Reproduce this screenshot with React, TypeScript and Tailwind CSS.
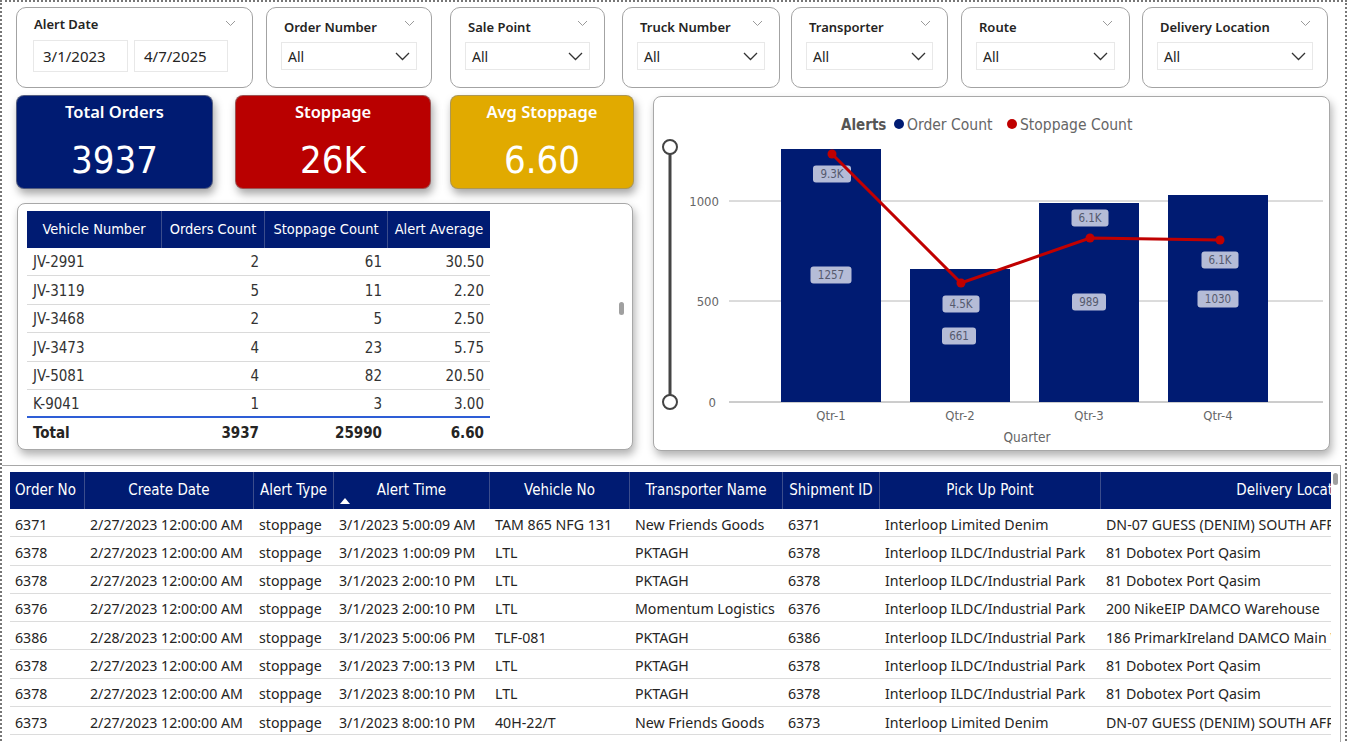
import React from 'react';

const din = "font-['DejaVu_Sans_Condensed','DejaVu_Sans',sans-serif] font-stretch-condensed";

type Filter = { label: string; box: string };

const filters: Filter[] = [
  { label: 'Order Number', box: 'ml-[13px] w-[166px]' },
  { label: 'Sale Point', box: 'ml-[18px] w-[155px]' },
  { label: 'Truck Number', box: 'ml-[17px] w-[158px]' },
  { label: 'Transporter', box: 'ml-[11px] w-[157px]' },
  { label: 'Route', box: 'ml-[13px] w-[169px]' },
  { label: 'Delivery Location', box: 'ml-[12px] w-[186px]' },
];

const vehicles = [
  ['JV-2991', '2', '61', '30.50'],
  ['JV-3119', '5', '11', '2.20'],
  ['JV-3468', '2', '5', '2.50'],
  ['JV-3473', '4', '23', '5.75'],
  ['JV-5081', '4', '82', '20.50'],
  ['K-9041', '1', '3', '3.00'],
];

const cols = [
  { name: 'Order No', w: 'w-[75px]', head: 'justify-start pl-[5px]' },
  { name: 'Create Date', w: 'w-[169px]', head: 'justify-center' },
  { name: 'Alert Type', w: 'w-[80px]', head: 'justify-center' },
  { name: 'Alert Time', w: 'w-[156px]', head: 'justify-center' },
  { name: 'Vehicle No', w: 'w-[140px]', head: 'justify-center' },
  { name: 'Transporter Name', w: 'w-[153px]', head: 'justify-center' },
  { name: 'Shipment ID', w: 'w-[97px]', head: 'justify-center' },
  { name: 'Pick Up Point', w: 'w-[221px]', head: 'justify-center' },
  { name: 'Delivery Location', w: 'w-[388px]', head: 'justify-center' },
];

const ilp = 'Interloop ILDC/Industrial Park';
const d27 = '2/27/2023 12:00:00 AM';

const alerts = [
  ['6371', d27, 'stoppage', '3/1/2023 5:00:09 AM', 'TAM 865 NFG 131', 'New Friends Goods', '6371', 'Interloop Limited Denim', 'DN-07 GUESS (DENIM) SOUTH AFRICA'],
  ['6378', d27, 'stoppage', '3/1/2023 1:00:09 PM', 'LTL', 'PKTAGH', '6378', ilp, '81 Dobotex Port Qasim'],
  ['6378', d27, 'stoppage', '3/1/2023 2:00:10 PM', 'LTL', 'PKTAGH', '6378', ilp, '81 Dobotex Port Qasim'],
  ['6376', d27, 'stoppage', '3/1/2023 2:00:10 PM', 'LTL', 'Momentum Logistics', '6376', ilp, '200 NikeEIP DAMCO Warehouse'],
  ['6386', '2/28/2023 12:00:00 AM', 'stoppage', '3/1/2023 5:00:06 PM', 'TLF-081', 'PKTAGH', '6386', ilp, '186 PrimarkIreland DAMCO Main Warehouse'],
  ['6378', d27, 'stoppage', '3/1/2023 7:00:13 PM', 'LTL', 'PKTAGH', '6378', ilp, '81 Dobotex Port Qasim'],
  ['6378', d27, 'stoppage', '3/1/2023 8:00:10 PM', 'LTL', 'PKTAGH', '6378', ilp, '81 Dobotex Port Qasim'],
  ['6373', d27, 'stoppage', '3/1/2023 8:00:10 PM', '40H-22/T', 'New Friends Goods', '6373', 'Interloop Limited Denim', 'DN-07 GUESS (DENIM) SOUTH AFRICA'],
];

function SmallChevron() {
  return (
    <svg width="11" height="7" viewBox="0 0 11 7" className="absolute right-[16px] top-[12px]">
      <path d="M1 1 L5.5 5.5 L10 1" fill="none" stroke="#9a9a9a" strokeWidth="1" />
    </svg>
  );
}

function Dropdown() {
  return (
    <div className="mx-[14px] mt-[5px] h-[28px] border border-[#e8e8e8] flex items-center justify-between px-[6px]">
      <span className="text-[14px] text-[#252423]">All</span>
      <svg width="15" height="9" viewBox="0 0 15 9">
        <path d="M1 1 L7.5 7.5 L14 1" fill="none" stroke="#333" strokeWidth="1.3" />
      </svg>
    </div>
  );
}

function Kpi({ title, value, bg, box }: { title: string; value: string; bg: string; box: string }) {
  return (
    <div className={`${bg} ${box} h-[94px] rounded-[8px] border border-[#8a8a8a]/60 shadow-[2px_5px_8px_rgba(0,0,0,0.35)] flex flex-col items-center text-white`}>
      <div className="mt-[4px] text-[16.5px] font-semibold">{title}</div>
      <div className={`${din} mt-[16px] text-[38px] leading-none`}>{value}</div>
    </div>
  );
}

function Chart() {
  const bars = [
    { q: 'Qtr-1', x: 127, top: 52 },
    { q: 'Qtr-2', x: 256, top: 172 },
    { q: 'Qtr-3', x: 385, top: 106 },
    { q: 'Qtr-4', x: 514, top: 98 },
  ];
  const labels = [
    { t: '9.3K', x: 178, y: 77, w: 38 },
    { t: '1257', x: 177, y: 178, w: 41 },
    { t: '4.5K', x: 307, y: 207, w: 37 },
    { t: '661', x: 305, y: 239, w: 34 },
    { t: '6.1K', x: 436, y: 121, w: 37 },
    { t: '989', x: 435, y: 205, w: 34 },
    { t: '6.1K', x: 566, y: 163, w: 37 },
    { t: '1030', x: 564, y: 202, w: 41 },
  ];
  const axis = "DejaVu Sans Condensed, DejaVu Sans, sans-serif";
  return (
    <svg width="677" height="355" viewBox="0 0 677 355" className="block">
      <g fontFamily={axis} fontSize="14">
        <text x="187" y="33" fill="#555" fontWeight="bold" fontSize="15">Alerts</text>
        <circle cx="245" cy="27" r="5" fill="#001b72" />
        <text x="253" y="33" fill="#666" fontSize="15.5">Order Count</text>
        <circle cx="358" cy="27" r="5" fill="#c00000" />
        <text x="366" y="33" fill="#666" fontSize="15.5">Stoppage Count</text>
      </g>
      <line x1="75" y1="104" x2="669" y2="104" stroke="#b8b8b8" />
      <line x1="75" y1="204" x2="669" y2="204" stroke="#b8b8b8" />
      <line x1="75" y1="305" x2="669" y2="305" stroke="#9a9a9a" />
      <g fontFamily={axis} fontSize="13" fill="#666" textAnchor="end">
        <text x="65" y="109">1000</text>
        <text x="65" y="209">500</text>
        <text x="62" y="310">0</text>
      </g>
      <line x1="16" y1="50" x2="16" y2="305" stroke="#444" strokeWidth="3" />
      <circle cx="16" cy="50" r="7" fill="#fff" stroke="#444" strokeWidth="2" />
      <circle cx="16" cy="305" r="7" fill="#fff" stroke="#444" strokeWidth="2" />
      {bars.map((b) => (
        <g key={b.q}>
          <rect x={b.x} y={b.top} width="100" height={305 - b.top} fill="#001b72" />
          <text x={b.x + 50} y="323" textAnchor="middle" fontFamily={axis} fontSize="13" fill="#666">
            {b.q}
          </text>
        </g>
      ))}
      {labels.map((l, i) => (
        <g key={i}>
          <rect x={l.x - l.w / 2} y={l.y - 8.5} width={l.w} height="17" rx="3" fill="#b5bcd7" />
          <text x={l.x} y={l.y + 4} textAnchor="middle" fontFamily={axis} fontSize="11.5" fill="#555a6e">
            {l.t}
          </text>
        </g>
      ))}
      <polyline points="178,57 307,186 436,141 566,143" fill="none" stroke="#c00000" strokeWidth="3" />
      {[[178, 57], [307, 186], [436, 141], [566, 143]].map(([x, y]) => (
        <circle key={x} cx={x} cy={y} r="4.5" fill="#c00000" />
      ))}
      <text x="373" y="345" textAnchor="middle" fontFamily={axis} fontSize="13.5" fill="#666">
        Quarter
      </text>
    </svg>
  );
}

export default function App() {
  return (
    <div className="w-[1353px] h-[742px] overflow-hidden bg-white font-['Noto_Sans',sans-serif] text-[#252423]">
      <div className="w-[1347px] h-[760px] border-l-2 border-t-2 border-r-2 border-dotted border-[#777] flex flex-col">
        <section className="h-[463px] shrink-0">
          {/* slicers */}
          <div className="flex pt-[5px] pl-[14px]">
            <div className="relative w-[237px] h-[81px] rounded-[10px] border border-[#a3a3a3] bg-white">
              <div className="pl-[17px] pt-[6px] text-[13px] font-semibold leading-[20px]">Alert Date</div>
              <SmallChevron />
              <div className="flex gap-[6px] pl-[16px] mt-[6px]">
                <div className="w-[95px] h-[32px] border border-[#e8e8e8] flex items-center pl-[9px] text-[15px]">3/1/2023</div>
                <div className="w-[94px] h-[32px] border border-[#e8e8e8] flex items-center pl-[9px] text-[15px]">4/7/2025</div>
              </div>
            </div>
            {filters.map((f) => (
              <div key={f.label} className={`relative ${f.box} h-[81px] rounded-[10px] border border-[#a3a3a3] bg-white`}>
                <div className="pl-[17px] pt-[9px] text-[13px] font-semibold leading-[20px]">{f.label}</div>
                <SmallChevron />
                <Dropdown />
              </div>
            ))}
          </div>

          <div className="flex mt-[7px]">
            <div className="ml-[14px] w-[618px]">
              <div className="flex">
                <Kpi title="Total Orders" value="3937" bg="bg-[#001b72]" box="w-[197px]" />
                <Kpi title="Stoppage" value="26K" bg="bg-[#b90000]" box="ml-[22px] w-[196px]" />
                <Kpi title="Avg Stoppage" value="6.60" bg="bg-[#e1aa00]" box="ml-[19px] w-[184px]" />
              </div>

              {/* vehicle summary */}
              <div className="relative mt-[14px] ml-[1px] w-[616px] h-[247px] rounded-[8px] border border-[#a8a8a8] bg-white shadow-[2px_5px_8px_rgba(0,0,0,0.3)]">
                <div className={`${din} ml-[9px] mt-[7px] w-[463px] text-[15px]`}>
                  <div className="flex h-[37px] bg-[#001b72] text-white text-[14.5px]">
                    <div className="w-[135px] flex items-center justify-center border-r border-[#3b4d8c]">Vehicle Number</div>
                    <div className="w-[103px] flex items-center justify-center border-r border-[#3b4d8c]">Orders Count</div>
                    <div className="w-[123px] flex items-center justify-center border-r border-[#3b4d8c]">Stoppage Count</div>
                    <div className="w-[102px] flex items-center justify-center">Alert Average</div>
                  </div>
                  {vehicles.map((v, i) => (
                    <div key={v[0]} className={`flex h-[28.4px] items-center pt-[2px] text-[#333] ${i < 5 ? 'border-b border-[#dadada]' : 'border-b-2 border-[#2e5ed6]'}`}>
                      <div className="w-[135px] pl-[6px]">{v[0]}</div>
                      <div className="w-[103px] text-right pr-[6px]">{v[1]}</div>
                      <div className="w-[123px] text-right pr-[6px]">{v[2]}</div>
                      <div className="w-[102px] text-right pr-[6px]">{v[3]}</div>
                    </div>
                  ))}
                  <div className="flex h-[30px] items-center font-bold text-[#252423]">
                    <div className="w-[135px] pl-[6px]">Total</div>
                    <div className="w-[103px] text-right pr-[6px]">3937</div>
                    <div className="w-[123px] text-right pr-[6px]">25990</div>
                    <div className="w-[102px] text-right pr-[6px]">6.60</div>
                  </div>
                </div>
                <div className="absolute left-[601px] top-[98px] w-[5px] h-[13px] rounded-full bg-[#a0a0a0]" />
              </div>
            </div>

            {/* chart */}
            <div className="ml-[19px] mt-[1px] w-[677px] h-[355px] rounded-[8px] border border-[#a8a8a8] bg-white shadow-[2px_5px_8px_rgba(0,0,0,0.3)] overflow-hidden">
              <Chart />
            </div>
          </div>
        </section>

        {/* alert details */}
        <section className="relative w-[1339px] h-[300px] border-t border-r border-[#a8a8a8] pt-[6px] pl-[8px]">
          <div className="w-[1321px] overflow-hidden">
            <div className="w-[1480px]">
              <div className={`${din} flex h-[37px] bg-[#001b72] text-white text-[15px]`}>
                {cols.map((c, i) => (
                  <div key={c.name} className={`${c.w} relative shrink-0 flex items-center ${c.head} ${i < cols.length - 1 ? 'border-r border-[#3b4d8c]' : ''}`}>
                    {c.name}
                    {c.name === 'Alert Time' && (
                      <span className="absolute left-[6px] bottom-[5px] w-0 h-0 border-l-[5px] border-r-[5px] border-b-[6px] border-l-transparent border-r-transparent border-b-white" />
                    )}
                  </div>
                ))}
              </div>
              {alerts.map((r, ri) => (
                <div key={ri} className="flex h-[28.3px] items-center pt-[3px] border-b border-[#dcdcdc] text-[14.2px] text-[#252423]">
                  {r.map((cell, ci) => (
                    <div key={ci} className={`${cols[ci].w} shrink-0 whitespace-nowrap overflow-hidden pl-[5px]`}>
                      {cell}
                    </div>
                  ))}
                </div>
              ))}
            </div>
          </div>
          <div className="absolute left-[1331px] top-[7px] w-[5px] h-[12px] rounded-full bg-[#a0a0a0]" />
        </section>
      </div>
    </div>
  );
}
